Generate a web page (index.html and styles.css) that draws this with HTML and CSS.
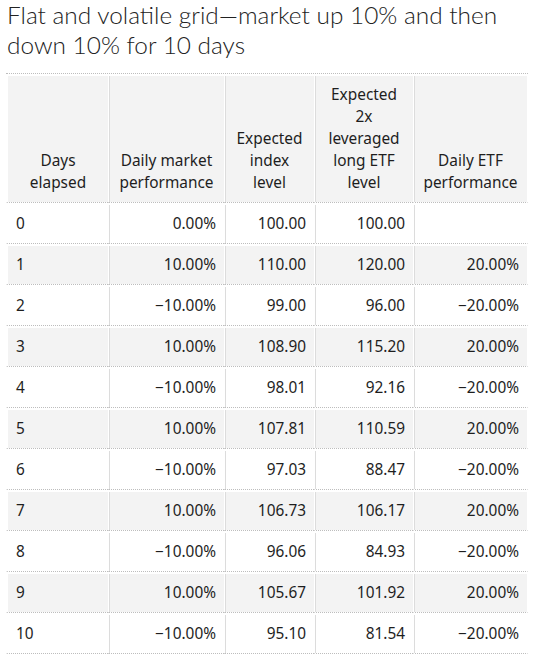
FILE: index.html
```html
<!DOCTYPE html>
<html lang="en">

<head>
    <meta charset="UTF-8">
    <meta name="viewport" content="width=device-width, initial-scale=1.0">
    <title>Flat and volatile grid</title>
    <link rel="stylesheet" href="styles.css">
</head>

<body>
    <div class="page">
        <h2 class="grid-title">Flat and volatile grid—market up 10% and then down 10% for 10 days</h2>

        <table class="grid-table">
            <colgroup>
                <col class="col-days">
                <col class="col-market">
                <col class="col-index">
                <col class="col-etf">
                <col class="col-etf-perf">
            </colgroup>
            <thead>
                <tr>
                    <th>Days elapsed</th>
                    <th>Daily market performance</th>
                    <th>Expected index level</th>
                    <th>Expected 2x leveraged long ETF level</th>
                    <th>Daily ETF performance</th>
                </tr>
            </thead>
            <tbody>
                <tr>
                    <td>0</td>
                    <td>0.00%</td>
                    <td>100.00</td>
                    <td>100.00</td>
                    <td></td>
                </tr>
                <tr>
                    <td>1</td>
                    <td>10.00%</td>
                    <td>110.00</td>
                    <td>120.00</td>
                    <td>20.00%</td>
                </tr>
                <tr>
                    <td>2</td>
                    <td>&minus;10.00%</td>
                    <td>99.00</td>
                    <td>96.00</td>
                    <td>&minus;20.00%</td>
                </tr>
                <tr>
                    <td>3</td>
                    <td>10.00%</td>
                    <td>108.90</td>
                    <td>115.20</td>
                    <td>20.00%</td>
                </tr>
                <tr>
                    <td>4</td>
                    <td>&minus;10.00%</td>
                    <td>98.01</td>
                    <td>92.16</td>
                    <td>&minus;20.00%</td>
                </tr>
                <tr>
                    <td>5</td>
                    <td>10.00%</td>
                    <td>107.81</td>
                    <td>110.59</td>
                    <td>20.00%</td>
                </tr>
                <tr>
                    <td>6</td>
                    <td>&minus;10.00%</td>
                    <td>97.03</td>
                    <td>88.47</td>
                    <td>&minus;20.00%</td>
                </tr>
                <tr>
                    <td>7</td>
                    <td>10.00%</td>
                    <td>106.73</td>
                    <td>106.17</td>
                    <td>20.00%</td>
                </tr>
                <tr>
                    <td>8</td>
                    <td>&minus;10.00%</td>
                    <td>96.06</td>
                    <td>84.93</td>
                    <td>&minus;20.00%</td>
                </tr>
                <tr>
                    <td>9</td>
                    <td>10.00%</td>
                    <td>105.67</td>
                    <td>101.92</td>
                    <td>20.00%</td>
                </tr>
                <tr>
                    <td>10</td>
                    <td>&minus;10.00%</td>
                    <td>95.10</td>
                    <td>81.54</td>
                    <td>&minus;20.00%</td>
                </tr>
            </tbody>
        </table>
    </div>
</body>

</html>
```

FILE: styles.css
```css
body {
    margin: 0;
    background-color: #fff;
    color: #1e1e1e;
    font-family: "Noto Sans", "Open Sans", sans-serif;
}

.page {
    padding: 0 6px;
}

/* Title */
.grid-title {
    margin: 0 0 13px 1px;
    font-family: "Lato", "Noto Sans", sans-serif;
    font-size: 24.4px;
    font-weight: 300;
    line-height: 30px;
    color: #222;
}

/* Table */
.grid-table {
    width: 522px;
    table-layout: fixed;
    border-collapse: separate;
    border-spacing: 0;
    border-top: 1px dotted #bdbdbd;
    font-size: 15.4px;
    line-height: 22px;
}

.col-days {
    width: 102px;
}

.col-market {
    width: 116px;
}

.col-index {
    width: 90px;
}

.col-etf {
    width: 99px;
}

.col-etf-perf {
    width: 115px;
}

.grid-table th,
.grid-table td {
    box-sizing: border-box;
    padding: 8px;
    border-top: 2px solid transparent;
    border-left: 1px solid transparent;
    border-bottom: 1px dotted #bdbdbd;
    background-clip: padding-box;
    /* thin grey rule at the left of each cell */
    box-shadow: inset 1px 0 0 #dcdcdc;
}

.grid-table th:first-child,
.grid-table td:first-child {
    border-left-width: 2px;
    box-shadow: none;
}

.grid-table th:last-child,
.grid-table td:last-child {
    border-right: 1px solid transparent;
}

.grid-table th {
    font-weight: normal;
    text-align: center;
    vertical-align: bottom;
    background-color: #f3f3f3;
}

.grid-table td {
    text-align: right;
    vertical-align: middle;
}

.grid-table td:first-child {
    text-align: left;
}

.grid-table tbody tr:nth-child(even) td {
    background-color: #f3f3f3;
}
```
